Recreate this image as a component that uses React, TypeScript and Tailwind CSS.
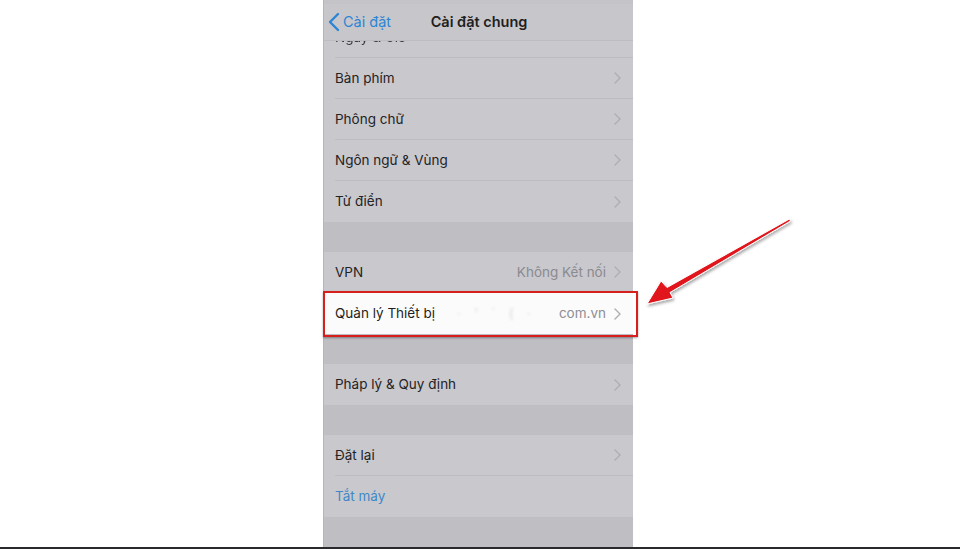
import React from 'react';

type Row = { label: string; value?: string; blue?: boolean; chevron?: boolean };

const font = { fontFamily: 'Inter, "Noto Sans", sans-serif' };

function Chevron() {
  return (
    <svg width="7" height="12" viewBox="0 0 7 12" className="shrink-0">
      <path d="M1 1l5 5-5 5" fill="none" stroke="#aeadb2" strokeWidth="1.4" strokeLinecap="round" strokeLinejoin="round" />
    </svg>
  );
}

function SettingsRow({ row, last }: { row: Row; last?: boolean }) {
  return (
    <div className="h-[41px] pl-[11px] flex items-stretch bg-[#c9c8cd]">
      <div className={`flex-1 flex items-center pr-[12px] ${last ? '' : 'border-b border-[#bdbcc1]'}`}>
        <span className={`text-[13.5px] whitespace-nowrap ${row.blue ? 'text-[#3f88c8]' : 'text-[#232325]'}`}>{row.label}</span>
        <span className="flex-1" />
        {row.value && <span className="text-[13.5px] whitespace-nowrap text-[#8b8a8f] mr-[8px]">{row.value}</span>}
        {row.chevron !== false && <Chevron />}
      </div>
    </div>
  );
}

function Group({ rows }: { rows: Row[] }) {
  return (
    <div>
      {rows.map((r, i) => (
        <SettingsRow key={r.label} row={r} last={i === rows.length - 1} />
      ))}
    </div>
  );
}

function Gap() {
  return <div className="h-[30px] bg-[#bfbec3]" />;
}

export default function App() {
  return (
    <div className="relative w-[960px] h-[549px] bg-white overflow-hidden" style={font}>
      <div className="relative ml-[323px] w-[310px] h-[547px] bg-[#c9c8cd] flex flex-col border-l border-[#b5b4b9]">
        {/* status bar remnant */}
        <div className="h-[4px] bg-[#c4c3c8]" />

        {/* navigation bar */}
        <div className="h-[36px] flex items-center relative bg-[#c7c6cb]">
          <div className="flex items-center pl-[4px] text-[#2c85d4]">
            <svg width="12" height="20" viewBox="0 0 12 20">
              <path d="M10 2L2 10l8 8" fill="none" stroke="#2c85d4" strokeWidth="2.4" strokeLinecap="round" strokeLinejoin="round" />
            </svg>
            <span className="text-[14.5px] ml-[3px] whitespace-nowrap">Cài đặt</span>
          </div>
          <span className="absolute left-0 right-0 text-center text-[14.5px] font-semibold text-[#1f1f21] pl-[1px] whitespace-nowrap">Cài đặt chung</span>
        </div>

        {/* row scrolled under the nav bar */}
        <div className="h-[18px] pl-[11px] overflow-hidden border-t border-[#bdbcc1] relative">
          <div className="absolute left-[11px] top-[-14px] text-[13.5px] text-[#3a3a3c] blur-[0.6px] whitespace-nowrap">Ngày &amp; Giờ</div>
          <div className="absolute left-[11px] right-0 bottom-0 border-b border-[#bdbcc1]" />
        </div>

        <Group
          rows={[
            { label: 'Bàn phím' },
            { label: 'Phông chữ' },
            { label: 'Ngôn ngữ & Vùng' },
            { label: 'Từ điển' },
          ]}
        />
        <Gap />

        <SettingsRow row={{ label: 'VPN', value: 'Không Kết nối' }} />
        <div className="h-[41px] pl-[11px] pr-[12px] flex items-center bg-[#fbfbfb]">
          <span className="text-[13.5px] text-[#1f1f21] whitespace-nowrap">Quản lý Thiết bị</span>
          <span className="ml-[22px] text-[13px] text-[#d6d6d6] blur-[1.5px] tracking-[5px] whitespace-nowrap">· ' ˙ ( ·</span>
          <span className="flex-1" />
          <span className="text-[13.5px] text-[#8e8e93] mr-[8px] whitespace-nowrap">com.vn</span>
          <Chevron />
        </div>
        <Gap />

        <Group rows={[{ label: 'Pháp lý & Quy định' }]} />
        <Gap />

        <Group rows={[{ label: 'Đặt lại' }, { label: 'Tắt máy', blue: true, chevron: false }]} />
        <div className="flex-1 bg-[#bfbec3]" />

        {/* highlight frame */}
        <div className="absolute left-[-1px] top-[291px] w-[315px] h-[46px] border-2 border-[#d5201c] shadow-[0_1px_2px_rgba(0,0,0,0.35)]" />
      </div>
      <div className="h-[2px] bg-[#2a2a2c]" />

      {/* pointer arrow */}
      <svg className="absolute inset-0" width="960" height="549" viewBox="0 0 960 549">
        <defs>
          <filter id="arrowShadow" x="-10%" y="-10%" width="120%" height="120%">
            <feDropShadow dx="1" dy="2" stdDeviation="1.5" floodColor="#000" floodOpacity="0.35" />
          </filter>
        </defs>
        <polygon
          points="647,304 673,298 670,292.5 790.5,221 789.5,219 667,287.5 661,281"
          fill="#e1161b"
          stroke="#ffffff"
          strokeWidth="1"
          strokeLinejoin="round"
          filter="url(#arrowShadow)"
        />
      </svg>
    </div>
  );
}
